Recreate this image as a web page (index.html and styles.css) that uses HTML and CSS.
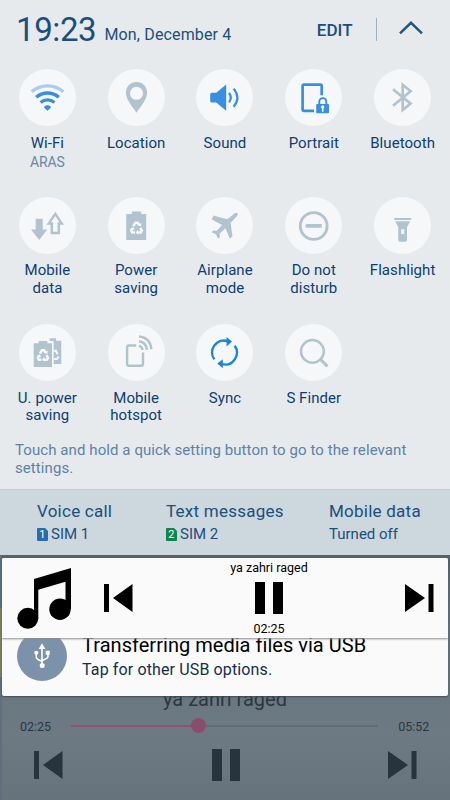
FILE: index.html
```html
<!DOCTYPE html>
<html lang="en">
<head>
<meta charset="utf-8">
<title>Quick settings</title>
<link rel="stylesheet" href="styles.css">
</head>
<body>
<svg width="0" height="0" class="defs" aria-hidden="true">
  <defs>
    <g id="recycle" fill="none" stroke="#f5f7f9" stroke-width="2.6">
      <path d="M-3.2-1.4L-1.2-4.9H1.2L2.6-2.5"/>
      <path d="M3.6.2L5.2 3 4 4.9H.8"/>
      <path d="M-1.6 4.9H-4.4L-5.4 3-4.2.8"/>
      <path d="M.7-2.2L4.6-1.4 4.9-4.6zM1.4 2.2V7.2L-1 4.8zM-6.2 1L-3.2-.9-2 2.4z" fill="#f5f7f9" stroke="none"/>
    </g>
    <g id="previous"><path d="M0 0h5v28H0zM28.5 0v28L9 14z"/></g>
    <g id="next"><path d="M0 0v28L20 14zM23.5 0h5v28h-5z"/></g>
  </defs>
</svg>
<main class="screen">
  <section class="panel">
    <header class="status">
      <span class="time">19:23</span>
      <span class="date">Mon, December 4</span>
      <span class="edit">EDIT</span>
      <span class="rule"></span>
      <svg class="chevron" width="24" height="14" viewBox="0 0 24 14"><path d="M1 12.4L12 1.8l11 10.6" fill="none" stroke="#23577f" stroke-width="2.5"/></svg>
    </header>
    <div class="tiles">
      <div class="tile"><svg class="icon on" viewBox="0 0 57 57">
        <g class="line" stroke-width="3.3"><path d="M12.6 22.8A24 24 0 0 1 44.4 22.8" opacity=".4"/><path d="M17.2 28.2A17.3 17.3 0 0 1 39.8 28.2"/><path d="M21.6 33.4A10.5 10.5 0 0 1 35.4 33.4"/></g><path d="M25.2 37.6Q28.5 34.8 31.8 37.6V38.7L28.5 41.7 25.2 38.7z"/></svg>
        <span class="name">Wi-Fi</span><span class="sub">ARAS</span></div>
      <div class="tile"><svg class="icon" viewBox="0 0 57 57"><path fill-rule="evenodd" d="M28.5 13C22.5 13 17.9 17.6 17.9 23.6 17.9 31 24 37 28.5 43.7 33 37 39.1 31 39.1 23.6 39.1 17.6 34.5 13 28.5 13zM28.5 17.8a6.5 6.5 0 1 1 0 13 6.5 6.5 0 0 1 0-13z"/></svg>
        <span class="name">Location</span></div>
      <div class="tile"><svg class="icon on" viewBox="0 0 57 57"><path d="M15.7 23.7H20.2L30.2 15.5V41.8L20.2 33.5H15.7Q14.2 33.5 14.2 32V25.2Q14.2 23.7 15.7 23.7z"/><g class="line" stroke-width="2.2"><path d="M33 24Q36.6 28.6 33 33.3"/><path d="M37.6 19.6Q45.2 28.6 37.6 37.8"/></g></svg>
        <span class="name">Sound</span></div>
      <div class="tile"><svg class="icon on" viewBox="0 0 57 57"><path class="line" stroke-width="2.7" d="M29 41.8H19Q17.6 41.8 17.6 40.4V17Q17.6 15.6 19 15.6H35.3Q36.7 15.6 36.7 17V26.2"/><path class="line" stroke-width="1.9" d="M34.3 35.5V32.6a3.5 3.5 0 0 1 7 0V35.5"/><path fill-rule="evenodd" d="M32.2 35H43Q44 35 44 36V43.3Q44 44.3 43 44.3H32.2Q31.2 44.3 31.2 43.3V36Q31.2 35 32.2 35zM36.9 39.6V42.7H38.5V39.6A1.7 1.7 0 1 0 36.9 39.6z"/></svg>
        <span class="name">Portrait</span></div>
      <div class="tile"><svg class="icon" viewBox="0 0 57 57"><path class="line" stroke-width="2.7" d="M19 20.2L36.6 34.6 28.7 41V15.8L36.6 22.2 19 36.8"/></svg>
        <span class="name">Bluetooth</span></div>

      <div class="tile"><svg class="icon" viewBox="0 0 57 57"><path d="M16.7 21.8h7v10.6h4.5L20.2 43 12 32.4h4.7z"/><path class="line" stroke-width="2.5" d="M36.3 16.9L42.7 26.4H39.8V36H32.8V26.4H29.8z"/></svg>
        <span class="name">Mobile<br>data</span></div>
      <div class="tile"><svg class="icon" viewBox="0 0 57 57"><path d="M18.2 17h5.7v-2.5h9.3V17h5V43h-20z"/><use href="#recycle" transform="translate(28.6 30.6)"/></svg>
        <span class="name">Power<br>saving</span></div>
      <div class="tile"><svg class="icon" viewBox="0 0 57 57"><path d="M39.2 16Q42.5 14.8 41.6 18.2L34.6 26.1 36.5 39.2 33.9 41.8 29.4 31.2 23.7 36.5 24 39.8 22.2 41.7 19.9 37.3 15.6 35.2 17.4 33.4 20.8 33.8 26.2 28 15.8 22.4 17.5 18.5 31.2 22.2z"/></svg>
        <span class="name">Airplane<br>mode</span></div>
      <div class="tile"><svg class="icon" viewBox="0 0 57 57"><circle class="line" stroke-width="2.9" cx="28.7" cy="29" r="13.4"/><path d="M20.7 27.1h16v3.7h-16z"/></svg>
        <span class="name">Do not<br>disturb</span></div>
      <div class="tile"><svg class="icon" viewBox="0 0 57 57"><path fill-rule="evenodd" d="M20.2 21h17v2h-17zM21.2 24.2h15L33 30.3V43Q33 44.8 31.2 44.8H26Q24.2 44.8 24.2 43V30.3zM27.2 32.3V37h3v-4.7z"/></svg>
        <span class="name">Flashlight</span></div>

      <div class="tile"><svg class="icon" viewBox="0 0 57 57"><path d="M14.7 19.3h5V17h8.6v2.3H33V43H14.7zM30.6 16.7V14.2H37v2.5h5.3V40h-7.6V17.3z"/><use href="#recycle" transform="translate(24 31) scale(.96)"/><g fill="none" stroke="#f5f7f9" stroke-width="2"><path d="M34.7 27.4L36.8 26.6 38.6 30.2M34.7 35H38L39.7 32.5"/></g></svg>
        <span class="name">U. power<br>saving</span></div>
      <div class="tile"><svg class="icon" viewBox="0 0 57 57"><g class="line" stroke-width="2.4"><path d="M28.3 21.5H21Q19.1 21.5 19.1 23.4V40Q19.1 41.8 21 41.8H33.2Q35 41.8 35 40V28.6"/><path d="M30.8 22Q34 22.2 34.6 26"/><path d="M31 17.2Q38 18 39 25.8"/><path d="M31 12.4Q42.2 13.6 43.4 25.2"/></g></svg>
        <span class="name">Mobile<br>hotspot</span></div>
      <div class="tile"><svg class="icon sync" viewBox="0 0 57 57"><g class="line" stroke-width="2.4"><path d="M18.3 35.4A11.9 11.9 0 0 1 31.2 17"/><path d="M38.7 21.8A11.9 11.9 0 0 1 26.2 40.2"/></g><path d="M30.6 13L36 17.6 30.6 22.5zM26.8 35.2L21.3 39.6 26.8 44.2z"/></svg>
        <span class="name">Sync</span></div>
      <div class="tile"><svg class="icon" viewBox="0 0 57 57"><g class="line" stroke-width="2.4"><circle cx="27.4" cy="27.4" r="11.4"/><path d="M35.4 35.4L42.5 42.4" stroke-width="2.9"/></g></svg>
        <span class="name">S Finder</span></div>
    </div>
    <p class="hint">Touch and hold a quick setting button to go to the relevant settings.</p>
  </section>

  <section class="sims">
    <div class="sim voice"><b>Voice call</b><span><svg width="11" height="13" viewBox="0 0 11 13"><path d="M1 0h7l3 3v9q0 1-1 1H1q-1 0-1-1V1q0-1 1-1z" fill="#2a6bb0"/><text x="5.4" y="10.4">1</text></svg>SIM 1</span></div>
    <div class="sim texts"><b>Text messages</b><span><svg width="11" height="13" viewBox="0 0 11 13"><path d="M1 0h7l3 3v9q0 1-1 1H1q-1 0-1-1V1q0-1 1-1z" fill="#0b8650"/><text x="5.4" y="10.4">2</text></svg>SIM 2</span></div>
    <div class="sim mobile"><b>Mobile data</b><span>Turned off</span></div>
  </section>

  <section class="backdrop">
    <div class="cards">
      <article class="music">
        <svg class="note" width="54" height="62" viewBox="0 0 54 62"><path d="M17 11L54 0V41H48.5V13.7L21.3 21.8V50H17z"/><circle cx="10.8" cy="50.3" r="10.5"/><circle cx="43" cy="41.3" r="10.7"/></svg>
        <svg class="skip first" width="29" height="28"><use href="#previous"/></svg>
        <div class="now"><span>ya zahri raged</span><svg width="30" height="34"><path d="M1 1h10v32H1zM19 1h10v32H19z"/></svg><span>02:25</span></div>
        <svg class="skip last" width="29" height="28"><use href="#next"/></svg>
      </article>
      <article class="usb">
        <svg width="50" height="50" viewBox="0 0 50 50"><circle cx="25" cy="25" r="25" fill="#7b92aa"/><g fill="none" stroke="#fff" stroke-width="1.6"><path d="M25 17V34M19.3 23V26.2Q19.3 28.2 25 30.2M31 23V25.6Q31 27.6 25 29.4"/></g><path d="M25 12.3L28.4 18H21.6zM28.7 19.8h4v4h-4z" fill="#fff"/><circle cx="19.3" cy="21.8" r="2.1" fill="#fff"/><circle cx="25.2" cy="34.6" r="2.5" fill="#fff"/></svg>
        <div class="message"><b>Transferring media files via USB</b><span>Tap for other USB options.</span></div>
      </article>
    </div>
    <div class="player">
      <div class="title">ya zahri raged</div>
      <div class="seek"><span>02:25</span><div class="track"><div class="played"></div><i></i></div><span>05:52</span></div>
      <div class="controls"><svg width="29" height="28"><use href="#previous"/></svg><svg width="30" height="34"><path d="M1 1h10v32H1zM19 1h10v32H19z"/></svg><svg width="29" height="28"><use href="#next"/></svg></div>
    </div>
  </section>
</main>
</body>
</html>
```
FILE: styles.css
```css
* { box-sizing: border-box; }
body { margin: 0; font-family: Roboto, sans-serif; }
svg { display: block; flex: none; }
.defs { position: absolute; }
.screen { width: 450px; height: 800px; overflow: hidden; display: flex; flex-direction: column; background: #e6eaed; color: #1b4f7b; }

.panel { height: 490px; border-bottom: 1px solid #c3ccd3; }
.status { height: 60px; padding: 0 27px 0 16px; display: flex; }
.time { width: 88.5px; font-size: 33px; line-height: 60px; letter-spacing: -.4px; white-space: nowrap; }
.date { font-size: 16px; line-height: 69px; letter-spacing: .14px; white-space: nowrap; }
.edit { margin-left: auto; font-size: 17px; font-weight: 500; line-height: 60px; }
.rule { width: 1.5px; height: 23px; margin: 18px 22px 0 23px; background: #9db1c3; }
.chevron { margin-top: 21px; }

.tiles { height: 382px; padding: 9px 3px 0; display: grid; grid-template-columns: repeat(5, 1fr); grid-template-rows: repeat(3, 127.5px); }
.tile { display: flex; flex-direction: column; align-items: center; text-align: center; color: #0d3d74; }
.icon { width: 57px; height: 57px; border-radius: 50%; background: #f5f7f9; fill: #b2c3d0; color: #b2c3d0; }
.icon.on { fill: #368fdf; color: #368fdf; }
.icon.sync { fill: #1784dd; color: #1784dd; }
.line { fill: none; stroke: currentColor; }
.name { margin-top: 8.5px; font-size: 15px; line-height: 17.5px; letter-spacing: .06px; }
.sub { margin-top: 2px; font-size: 14px; line-height: 17px; letter-spacing: -.15px; color: #6b87a4; }
.hint { margin: 0; padding: 0 15px; font-size: 15px; line-height: 17.5px; letter-spacing: .08px; color: #5d82a6; }

.sims { height: 65px; background: #ccd7de; display: flex; padding-top: 11px; }
.sim { display: flex; flex-direction: column; }
.voice { width: 129px; margin-left: 37px; }
.texts { width: 163px; }
.sim b { font-size: 17px; font-weight: 400; line-height: 20px; letter-spacing: .24px; }
.sim span { display: flex; align-items: center; gap: 3px; margin-top: 3px; font-size: 15px; line-height: 20px; }
.sim text { fill: #fff; font-size: 11px; text-anchor: middle; }

.backdrop { position: relative; height: 245px; padding-top: 132px; border-left: 2px solid #606f7d; background: linear-gradient(#56616f 0, #657484 54px, #687680 120px, #6d7a83 180px, #66727c 245px); }
.backdrop::before { content: ""; position: absolute; left: -2px; top: 53px; width: 4px; height: 69px; background: #7d8262; }
.cards { position: absolute; z-index: 1; left: 0; top: 3px; width: 446px; height: 138px; border-radius: 2px; overflow: hidden; background: #fafafa; color: #000; box-shadow: 0 1px 2px #414c55; }
.music { position: relative; z-index: 1; height: 80px; padding-left: 15px; display: flex; background: #fafafa; box-shadow: 0 1px 2px #8b8b8b; }
.note { margin-top: 10px; }
.skip { margin-top: 26px; }
.first { margin-left: 33px; }
.now { width: 190px; margin-left: 41px; display: flex; flex-direction: column; align-items: center; font-size: 12.5px; line-height: 15px; }
.now { padding-top: 2px; gap: 6px; }
.last { margin-left: 41px; }
.usb { height: 58px; padding-left: 15px; display: flex; }
.usb svg { margin-top: -7px; }
.message { margin-left: 15px; margin-top: -5px; display: flex; flex-direction: column; }
.message b { font-size: 20px; font-weight: 400; line-height: 25px; letter-spacing: .03px; }
.message span { font-size: 16px; line-height: 24px; letter-spacing: .13px; color: #132f4d; }

.player { color: #2a3740; fill: #27343d; }
.title { padding-right: 2px; text-align: center; font-size: 20px; line-height: 24px; }
.seek { display: flex; height: 30px; align-items: center; padding: 0 18px; font-size: 12.5px; }
.seek span { width: 51px; }
.seek span:last-child { margin-left: 20px; width: 34px; }
.track { position: relative; width: 309px; height: 2px; background: #5f6c75; }
.played { width: 128px; height: 2px; background: #96506f; }
.track i { position: absolute; left: 120px; top: -7px; width: 15px; height: 15px; border-radius: 50%; background: #8a4d6c; }
.controls { height: 48px; padding: 0 33px 0 32px; display: flex; justify-content: space-between; align-items: center; }
```
